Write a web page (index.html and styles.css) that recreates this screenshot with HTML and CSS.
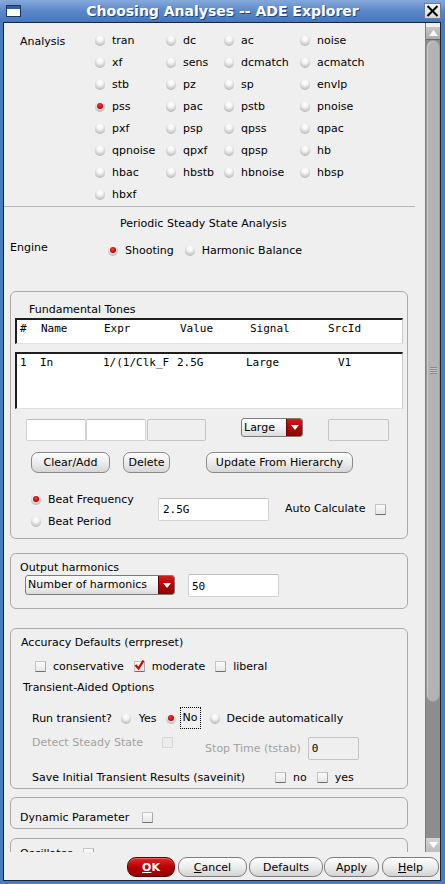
FILE: index.html
```html
<!DOCTYPE html>
<html>
<head>
<meta charset="utf-8">
<title>Choosing Analyses -- ADE Explorer</title>
<link rel="stylesheet" href="styles.css">
</head>
<body>
<div class="window">
  <div class="titlebar">
    <span class="winicon"></span>
    <span class="title">Choosing Analyses -- ADE Explorer</span>
    <span class="closebtn"><svg width="13" height="12" viewBox="0 0 13 12"><path d="M1.5 1 L11.5 11 M11.5 1 L1.5 11" stroke="#000" stroke-width="2" fill="none"/></svg></span>
  </div>
  <div class="client">
    <div class="main">
      <div class="scroll">
        <div class="analysis">
          <div class="an-label">Analysis</div>
          <div class="an-grid">
            <div class="opt"><span class="radio"></span>tran</div>
            <div class="opt"><span class="radio"></span>dc</div>
            <div class="opt"><span class="radio"></span>ac</div>
            <div class="opt"><span class="radio"></span>noise</div>
            <div class="opt"><span class="radio"></span>xf</div>
            <div class="opt"><span class="radio"></span>sens</div>
            <div class="opt"><span class="radio"></span>dcmatch</div>
            <div class="opt"><span class="radio"></span>acmatch</div>
            <div class="opt"><span class="radio"></span>stb</div>
            <div class="opt"><span class="radio"></span>pz</div>
            <div class="opt"><span class="radio"></span>sp</div>
            <div class="opt"><span class="radio"></span>envlp</div>
            <div class="opt"><span class="radio on"></span>pss</div>
            <div class="opt"><span class="radio"></span>pac</div>
            <div class="opt"><span class="radio"></span>pstb</div>
            <div class="opt"><span class="radio"></span>pnoise</div>
            <div class="opt"><span class="radio"></span>pxf</div>
            <div class="opt"><span class="radio"></span>psp</div>
            <div class="opt"><span class="radio"></span>qpss</div>
            <div class="opt"><span class="radio"></span>qpac</div>
            <div class="opt"><span class="radio"></span>qpnoise</div>
            <div class="opt"><span class="radio"></span>qpxf</div>
            <div class="opt"><span class="radio"></span>qpsp</div>
            <div class="opt"><span class="radio"></span>hb</div>
            <div class="opt"><span class="radio"></span>hbac</div>
            <div class="opt"><span class="radio"></span>hbstb</div>
            <div class="opt"><span class="radio"></span>hbnoise</div>
            <div class="opt"><span class="radio"></span>hbsp</div>
            <div class="opt"><span class="radio"></span>hbxf</div>
          </div>
        </div>
        <div class="sep"></div>
        <div class="heading">Periodic Steady State Analysis</div>
        <div class="engine">
          <div class="engine-label">Engine</div>
          <div class="opt opt-shoot"><span class="radio on"></span>Shooting</div>
          <div class="opt"><span class="radio"></span>Harmonic Balance</div>
        </div>

        <div class="group g-fund">
          <div class="g-title fund-title">Fundamental Tones</div>
          <div class="tbl tbl-head">
            <div class="trow">
              <span class="c-h1">#</span><span class="c-h2">Name</span><span class="c-h3">Expr</span><span class="c-h4">Value</span><span class="c-h5">Signal</span><span>SrcId</span>
            </div>
          </div>
          <div class="tbl tbl-data">
            <div class="trow">
              <span class="c-d1">1</span><span class="c-d2">In</span><span class="c-d3">1/(1/Clk_F</span><span class="c-d4">2.5G</span><span class="c-d5">Large</span><span>V1</span>
            </div>
          </div>
          <div class="fields-row">
            <span class="field f-w60"></span>
            <span class="field f-w60"></span>
            <span class="field f-dis f-w59"></span>
            <span class="combo combo-large"><span class="combo-text">Large</span><span class="combo-arrow"><svg width="8" height="5" viewBox="0 0 8 5"><path d="M0 0 H8 L4 5 Z" fill="#fff"/></svg></span></span>
            <span class="field f-dis f-last"></span>
          </div>
          <div class="btn-row">
            <span class="btn b-clear">Clear/Add</span>
            <span class="btn b-delete">Delete</span>
            <span class="btn b-update">Update From Hierarchy</span>
          </div>
          <div class="beat">
            <div class="beat-col">
              <div class="opt beat-opt"><span class="radio on"></span>Beat Frequency</div>
              <div class="opt beat-opt"><span class="radio"></span>Beat Period</div>
            </div>
            <span class="field f-text beat-input">2.5G</span>
            <span class="auto-label">Auto Calculate</span>
            <span class="cb auto-cb"></span>
          </div>
        </div>

        <div class="group g-out">
          <div class="g-title out-title">Output harmonics</div>
          <div class="out-row">
            <span class="combo combo-harm"><span class="combo-text">Number of harmonics</span><span class="combo-arrow"><svg width="8" height="5" viewBox="0 0 8 5"><path d="M0 0 H8 L4 5 Z" fill="#fff"/></svg></span></span>
            <span class="field f-text harm-input">50</span>
          </div>
        </div>

        <div class="group g-acc">
          <div class="g-title acc-title">Accuracy Defaults (errpreset)</div>
          <div class="acc-row">
            <div class="copt"><span class="cb"></span>conservative</div>
            <div class="copt"><span class="cb on"><svg width="11" height="11" viewBox="0 0 11 11"><path d="M1.5 5 L4.5 8.5 L9.5 0.5" stroke="#d00000" stroke-width="2.2" fill="none"/></svg></span>moderate</div>
            <div class="copt"><span class="cb"></span>liberal</div>
          </div>
          <div class="ta-title">Transient-Aided Options</div>
          <div class="run-row">
            <span class="run-label">Run transient?</span>
            <div class="opt run-yes"><span class="radio"></span>Yes</div>
            <div class="opt run-no"><span class="radio on"></span><span class="focus">No</span></div>
            <div class="opt"><span class="radio"></span>Decide automatically</div>
          </div>
          <div class="detect-row">
            <span class="dis detect-label">Detect Steady State</span>
            <span class="cb cb-dis detect-cb"></span>
            <span class="dis stop-label">Stop Time (tstab)</span>
            <span class="field f-dis f-text stop-input">0</span>
          </div>
          <div class="save-row">
            <span class="save-label">Save Initial Transient Results (saveinit)</span>
            <div class="copt"><span class="cb"></span>no</div>
            <div class="copt"><span class="cb"></span>yes</div>
          </div>
        </div>

        <div class="group g-dyn">
          <div class="dyn-row"><span class="dyn-label">Dynamic Parameter</span><span class="cb"></span></div>
        </div>

        <div class="group g-osc">
          <div class="osc-row"><span class="osc-label">Oscillator</span><span class="cb"></span></div>
        </div>
      </div>
      <div class="vscroll">
        <div class="vs-top"></div>
        <div class="vs-up"><svg width="9" height="6" viewBox="0 0 9 6"><path d="M0 6 H9 L4.5 0 Z" fill="#fff"/></svg></div>
        <div class="vs-thumb"><span class="grip"></span></div>
        <div class="vs-track"></div>
        <div class="vs-down"><svg width="9" height="6" viewBox="0 0 9 6"><path d="M0 0 H9 L4.5 6 Z" fill="#fff"/></svg></div>
      </div>
    </div>
    <div class="actions">
      <span class="abtn a-ok"><u>O</u>K</span>
      <span class="abtn a-cancel"><u>C</u>ancel</span>
      <span class="abtn a-defaults">Defaults</span>
      <span class="abtn a-apply">Apply</span>
      <span class="abtn a-help"><u>H</u>elp</span>
    </div>
  </div>
</div>
</body>
</html>
```
FILE: styles.css
```css
* { box-sizing: border-box; }
html, body { margin: 0; padding: 0; }
body {
  width: 445px; height: 884px; overflow: hidden;
  font-family: "DejaVu Sans", "Liberation Sans", sans-serif;
  font-size: 11px; color: #000;
  background: #4b7bc0;
}
.window {
  width: 445px; height: 884px;
  display: flex; flex-direction: column;
  background: #4b7bc0;
}
.titlebar {
  height: 22px; flex: none;
  display: flex; align-items: center;
  background: linear-gradient(#86a9dc, #5a88c9 50%, #4677bd);
}
.winicon {
  width: 15px; height: 12px; margin-left: 6px; flex: none;
  background: linear-gradient(#2f5fa8 0, #2f5fa8 3px, #ffffff 3px);
  border: 1px solid #1d3560;
}
.title {
  flex: 1; text-align: center;
  font-family: "DejaVu Sans", sans-serif; font-weight: bold; font-size: 14px;
  color: #fff; text-shadow: 1px 1px 0 #23457a;
  line-height: 22px;
}
.closebtn {
  width: 17px; height: 16px; margin-right: 4px; flex: none;
  display: flex; align-items: center; justify-content: center;
  background: linear-gradient(#f4f4f4, #d6d6d6);
  border: 1px solid #6d7d99;
}
.client {
  height: 859px; margin: 0 4px 3px 3px;
  border: 1px solid #1a2438;
  background: #efefef;
  display: flex; flex-direction: column;
}
.main { height: 829px; display: flex; flex: none; }
.scroll { width: 421px; height: 829px; overflow: hidden; flex: none; }

/* analysis */
.analysis { display: flex; padding-top: 6px; }
.an-label { width: 91px; padding-left: 16px; line-height: 22px; padding-top: 2px; }
.an-grid { display: grid; grid-template-columns: 71px 58px 76px 90px; grid-auto-rows: 22px; }
.opt { display: flex; align-items: center; gap: 7px; white-space: nowrap; }
.radio {
  width: 10px; height: 10px; border-radius: 50%; flex: none; position: relative;
  background: radial-gradient(circle at 50% 35%, #ffffff 0, #f4f4f4 35%, #cdcdcd 70%, #9c9c9c 100%);
  box-shadow: 0 1px 0 #bcbcbc;
}
.radio.on::after {
  content: ""; position: absolute; left: 2px; top: 2px; width: 6px; height: 6px; border-radius: 50%;
  background: radial-gradient(circle at 45% 40%, #ff4040 0, #d00000 55%, #800000 100%);
}
.sep { height: 1px; width: 411px; margin-top: 1px; background: #b6b6b6; }
.heading { margin-top: 9px; line-height: 16px; padding-left: 116px; }
.engine { display: flex; align-items: center; height: 20px; margin-top: 8px; }
.engine-label { width: 104px; padding-left: 6px; align-self: flex-start; line-height: 16px; }
.opt-shoot { margin-right: 11px; }

/* groups */
.group {
  margin-left: 6px; width: 398px;
  border: 1px solid #ababab; border-radius: 6px;
  overflow: hidden;
}
.g-fund { margin-top: 31px; height: 248px; }
.g-title { line-height: 14px; }
.fund-title { padding-top: 11px; padding-left: 18px; }
.tbl {
  margin-left: 4px; width: 388px;
  background: #fff;
  border-top: 2px solid #1e1e1e; border-left: 2px solid #1e1e1e;
  border-right: 1px solid #c9c9c9; border-bottom: 1px solid #e2e2e2;
  font-family: "DejaVu Sans Mono", "Liberation Mono", monospace; font-size: 11px;
}
.tbl-head { margin-top: 1px; height: 26px; }
.tbl-data { margin-top: 8px; height: 57px; }
.trow { display: flex; padding-top: 2px; padding-left: 3px; line-height: 14px; white-space: pre; }
.c-h1 { width: 21px; } .c-h2 { width: 63px; } .c-h3 { width: 76px; } .c-h4 { width: 70px; } .c-h5 { width: 78px; }
.c-d1 { width: 20px; } .c-d2 { width: 63px; } .c-d3 { width: 74px; } .c-d4 { width: 69px; } .c-d5 { width: 92px; }

.fields-row { display: flex; align-items: flex-start; margin-top: 10px; padding-left: 15px; height: 22px; }
.field {
  display: block; height: 22px; flex: none;
  background: #fff;
  border: 1px solid #d2d2d2; border-top-color: #bdbdbd;
  border-radius: 2px;
}
.f-w60 { width: 60px; }
.f-w59 { width: 59px; margin-left: 1px; }
.f-dis { background: #efefef; border-color: #c4c4c4; }
.f-last { width: 61px; margin-left: 25px; }
.f-text {
  font-family: "DejaVu Sans Mono", "Liberation Mono", monospace; font-size: 11px;
  line-height: 20px; padding-left: 3px;
}
.combo {
  display: flex; flex: none; height: 19px;
  border: 1px solid #7b7b7b; border-radius: 3px;
  background: linear-gradient(#ffffff, #f2f2f2 50%, #dcdcdc);
  overflow: hidden;
}
.combo-text { flex: 1; padding-left: 2px; line-height: 17px; font-size: 11px; }
.combo-arrow {
  width: 16px; display: flex; align-items: center; justify-content: center;
  background: linear-gradient(#d61a1a, #b40000 55%, #8e0000);
  border-left: 1px solid #6d0000;
}
.combo-large { width: 62px; margin-left: 35px; margin-top: -1px; }

.btn-row { display: flex; margin-top: 11px; padding-left: 20px; height: 21px; }
.btn {
  display: flex; align-items: center; justify-content: center; flex: none;
  height: 21px;
  border: 1px solid #8a8a8a; border-radius: 7px;
  background: linear-gradient(#fdfdfd, #ececec 50%, #d6d6d6);
  box-shadow: inset 0 1px 0 #fff;
}
.b-clear { width: 79px; }
.b-delete { width: 47px; margin-left: 13px; }
.b-update { width: 147px; margin-left: 36px; }

.beat { display: flex; align-items: flex-start; margin-top: 15px; padding-left: 20px; }
.beat-col { width: 127px; display: flex; flex-direction: column; }
.beat-opt { height: 22px; }
.beat-input { width: 111px; height: 23px; margin-top: 10px; padding-left: 4px; line-height: 21px; }
.auto-label { margin-left: 16px; margin-top: 14px; line-height: 14px; }
.auto-cb { margin-left: 10px; margin-top: 16px; }

.cb {
  width: 11px; height: 11px; flex: none; display: block; position: relative;
  background: linear-gradient(#fcfcfc, #e6e6e6);
  border: 1px solid #c4c4c4; border-bottom-color: #6e6e6e; border-right-color: #a8a8a8;
  border-radius: 1px;
}
.cb svg { position: absolute; left: -1px; top: -2px; }
.cb-dis { background: #ebebeb; border-color: #d6d6d6; }

.g-out { margin-top: 14px; height: 56px; }
.out-title { padding-top: 7px; padding-left: 9px; }
.out-row { display: flex; align-items: flex-start; }
.combo-harm { width: 150px; height: 20px; margin-left: 14px; }
.combo-harm .combo-text { line-height: 18px; }
.harm-input { width: 91px; height: 23px; margin-left: 13px; margin-top: -1px; line-height: 23px; }

.g-acc { margin-top: 19px; height: 161px; }
.acc-title { padding-top: 7px; padding-left: 10px; }
.acc-row { display: flex; align-items: center; height: 20px; margin-top: 6px; padding-left: 24px; }
.copt { display: flex; align-items: center; gap: 7px; margin-right: 10px; white-space: nowrap; }
.ta-title { margin-top: 5px; line-height: 14px; padding-left: 12px; }
.run-row { display: flex; align-items: center; height: 22px; margin-top: 12px; padding-left: 21px; }
.run-label { margin-right: 9px; }
.run-yes { margin-right: 9px; gap: 8px; }
.run-no { gap: 4px; margin-right: 9px; }
.focus { border: 1px dotted #000; padding: 3px 2px 3px 2px; line-height: 14px; }
.detect-row { display: flex; align-items: flex-start; height: 23px; margin-top: 8px; padding-left: 21px; }
.dis { color: #a2a2a2; }
.detect-label { line-height: 12px; }
.detect-cb { margin-left: 19px; }
.stop-label { margin-left: 32px; margin-top: 5px; line-height: 14px; }
.stop-input { width: 51px; height: 23px; margin-left: 7px; line-height: 21px; }
.save-row { display: flex; align-items: center; height: 16px; margin-top: 9px; padding-left: 21px; }
.save-label { margin-right: 30px; white-space: nowrap; }
.save-row .copt { gap: 7px; }

.g-dyn { margin-top: 8px; height: 32px; }
.dyn-row { display: flex; align-items: center; height: 16px; margin-top: 11px; padding-left: 9px; }
.dyn-label { margin-right: 13px; }
.g-osc { margin-top: 9px; height: 32px; }
.osc-row { display: flex; align-items: center; height: 16px; margin-top: 6px; padding-left: 9px; }
.osc-label { margin-right: 11px; }

/* scrollbar */
.vscroll {
  width: 15px; flex: none; display: flex; flex-direction: column;
  background: #8d8d8d; border-left: 1px solid #7c7c7c;
}
.vs-top { height: 4px; background: #efefef; }
.vs-up {
  height: 13px; display: flex; align-items: center; justify-content: center;
  background: linear-gradient(#c6c6c6, #acacac);
  border-bottom: 1px solid #6a6a6a;
}
.vs-thumb {
  height: 662px; position: relative;
  background: #b3b3b3;
  border: 1px solid #9c9c9c; border-radius: 7px;
  box-shadow: inset 1px 1px 0 #c8c8c8;
}
.grip {
  position: absolute; left: 3px; top: 326px; width: 7px; height: 7px;
  background: repeating-linear-gradient(#8a8a8a 0, #8a8a8a 1px, #c4c4c4 1px, #c4c4c4 2px);
}
.vs-track { flex: 1; background: #8d8d8d; }
.vs-down {
  height: 14px; display: flex; align-items: center; justify-content: center;
  background: linear-gradient(#d4d4d4, #bcbcbc);
}

/* bottom buttons */
.actions { height: 28px; display: flex; align-items: flex-start; padding-top: 5px; padding-left: 123px; }
.abtn {
  height: 20px; flex: none;
  display: flex; align-items: center; justify-content: center;
  border: 1px solid #7d7d7d; border-radius: 9px;
  background: linear-gradient(#fdfdfd, #ececec 50%, #d3d3d3);
  box-shadow: inset 0 1px 0 #fff;
}
.abtn u { text-decoration: underline; }
.a-ok {
  width: 48px;
  background: linear-gradient(#dc2a2a, #bb0000 50%, #940000);
  border-color: #5a0000; color: #fff; font-weight: bold;
  box-shadow: inset 0 1px 0 #f06060;
}
.a-cancel { width: 69px; margin-left: 3px; }
.a-defaults { width: 74px; margin-left: 2px; }
.a-apply { width: 55px; margin-left: 1px; }
.a-help { width: 57px; margin-left: 3px; }
```
